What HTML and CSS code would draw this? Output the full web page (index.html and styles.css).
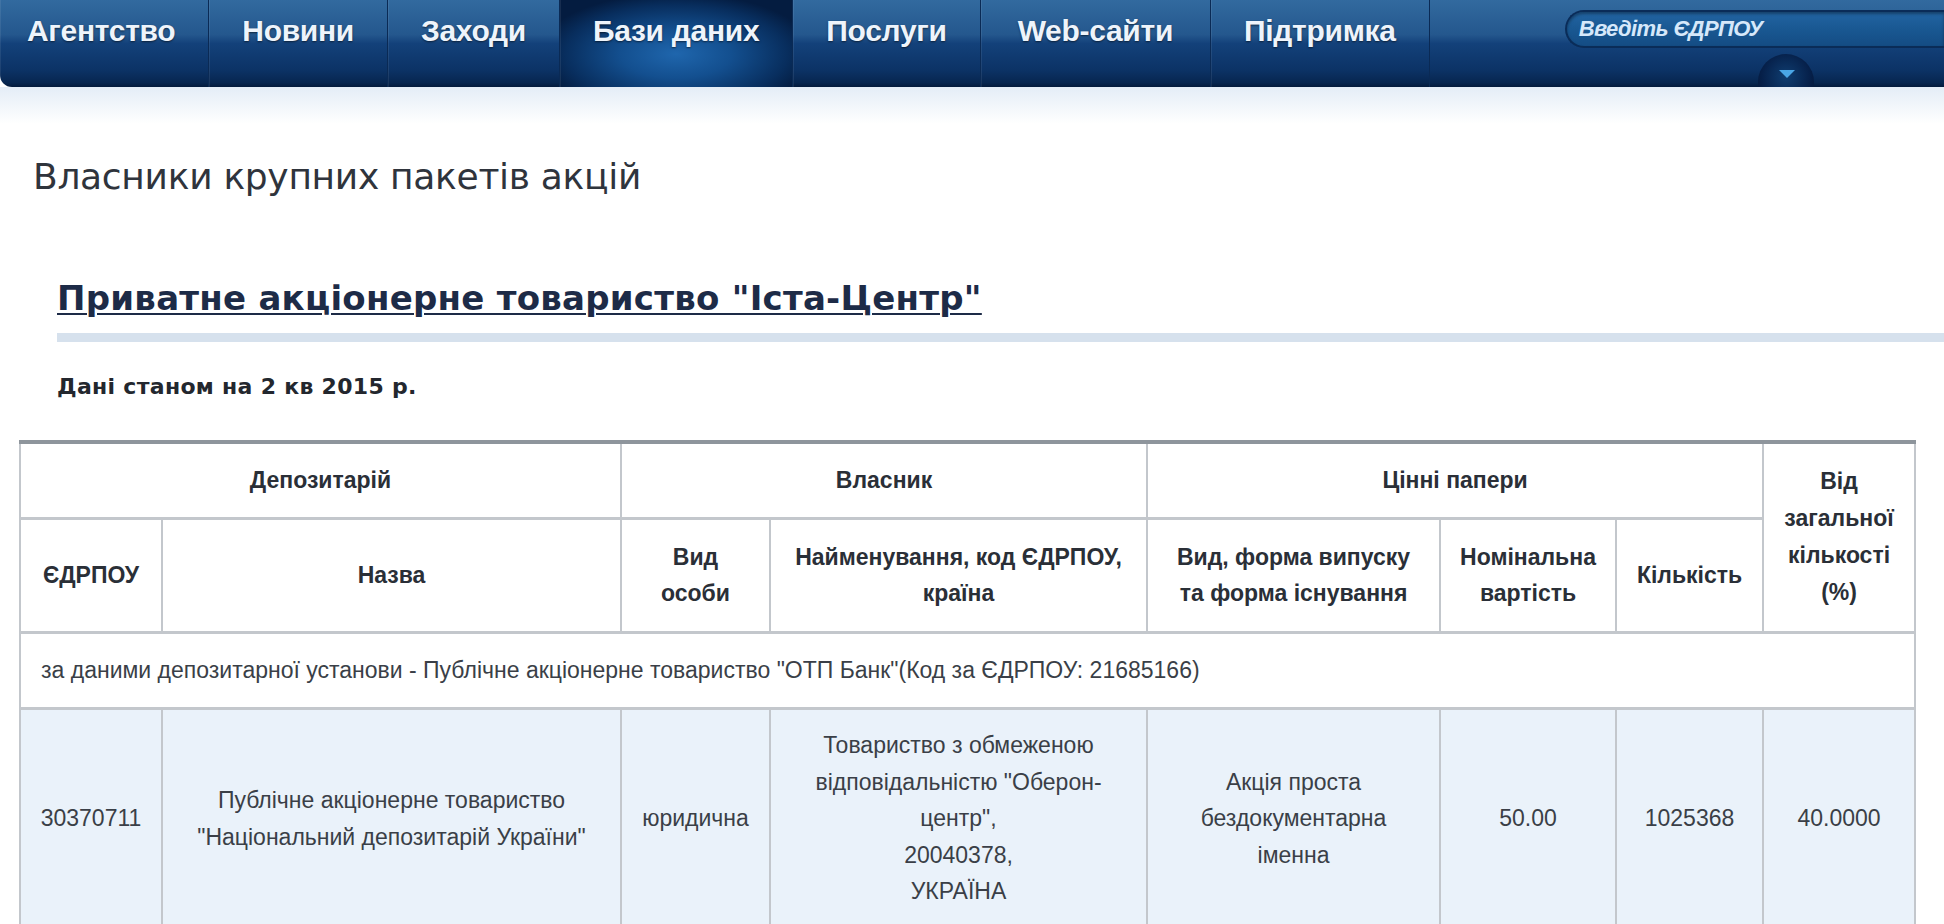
FILE: index.html
```html
<!DOCTYPE html>
<html lang="uk">
<head>
<meta charset="utf-8">
<title>Власники крупних пакетів акцій</title>
<link rel="stylesheet" href="styles.css">
</head>
<body>
<nav class="topnav">
  <ul class="menu">
    <li class="item first">Агентство</li>
    <li class="item">Новини</li>
    <li class="item">Заходи</li>
    <li class="item active">Бази даних</li>
    <li class="item">Послуги</li>
    <li class="item wide">Web-сайти</li>
    <li class="item">Підтримка</li>
  </ul>
  <div class="search-area">
    <div class="search">Введіть ЄДРПОУ</div>
    <span class="drop"><span class="tri"></span></span>
  </div>
</nav>
<div class="subbar"></div>
<main class="content">
  <h1 class="page-title">Власники крупних пакетів акцій</h1>
  <section class="company">
    <h2 class="company-name"><a href="#">Приватне акціонерне товариство "Іста-Центр"</a></h2>
    <div class="rule"></div>
    <p class="date">Дані станом на 2 кв 2015 р.</p>
  </section>
  <table class="owners">
    <colgroup>
      <col class="c1"><col class="c2"><col class="c3"><col class="c4">
      <col class="c5"><col class="c6"><col class="c7"><col class="c8">
    </colgroup>
    <thead>
      <tr class="h1">
        <th colspan="2">Депозитарій</th>
        <th colspan="2">Власник</th>
        <th colspan="3">Цінні папери</th>
        <th rowspan="2" class="pct">Від<br>загальної<br>кількості<br>(%)</th>
      </tr>
      <tr class="h2">
        <th>ЄДРПОУ</th>
        <th>Назва</th>
        <th>Вид<br>особи</th>
        <th>Найменування, код ЄДРПОУ,<br>країна</th>
        <th>Вид, форма випуску<br>та форма існування</th>
        <th>Номінальна<br>вартість</th>
        <th>Кількість</th>
      </tr>
    </thead>
    <tbody>
      <tr class="info">
        <td colspan="8">за даними депозитарної установи - Публічне акціонерне товариство "ОТП Банк"(Код за ЄДРПОУ: 21685166)</td>
      </tr>
      <tr class="data">
        <td>30370711</td>
        <td>Публічне акціонерне товариство<br>"Національний депозитарій України"</td>
        <td>юридична</td>
        <td>Товариство з обмеженою<br>відповідальністю "Оберон-<br>центр",<br>20040378,<br>УКРАЇНА</td>
        <td>Акція проста<br>бездокументарна<br>іменна</td>
        <td>50.00</td>
        <td>1025368</td>
        <td>40.0000</td>
      </tr>
    </tbody>
  </table>
</main>
</body>
</html>
```
FILE: styles.css
```css
html, body {
  margin: 0;
  padding: 0;
  background: #ffffff;
  font-family: "Liberation Sans", Arial, "Helvetica Neue", sans-serif;
  color: #2b2f36;
}

.topnav {
  display: flex;
  height: 87px;
  overflow: hidden;
  border-bottom-left-radius: 12px;
  background: linear-gradient(to bottom, #326a9f 0%, #24578d 40%, #13417a 50%, #0c3366 80%, #072650 95%, #031a3c 100%);
}

.menu {
  display: flex;
  margin: 0;
  padding: 0;
  list-style: none;
}

.item {
  padding: 12px 33px 0 33px;
  font-size: 30px;
  font-weight: bold;
  line-height: 38px;
  color: #eef4fb;
  text-shadow: 0 1px 2px rgba(0, 0, 0, 0.55);
  letter-spacing: -0.3px;
  border-right: 1px solid #0a2a55;
  box-shadow: inset 1px 0 0 rgba(255, 255, 255, 0.08);
  white-space: nowrap;
}

.item.first {
  padding-left: 27px;
}

.item.wide {
  padding-left: 37px;
  padding-right: 37px;
}

.item.active {
  background: radial-gradient(ellipse 60% 70% at 50% 62%, #1f66ad 0%, #134f8f 40%, #082e5e 80%, #041c40 100%);
}

.search-area {
  position: relative;
  flex: 1;
  padding: 10px 0 0 135px;
}

.search {
  height: 34px;
  padding-left: 12px;
  border: 2px solid #0a2c58;
  border-right: none;
  border-radius: 20px 0 0 20px;
  background: linear-gradient(to bottom, #2264a2 0%, #195892 50%, #144c84 100%);
  box-shadow: inset 0 2px 3px rgba(0, 0, 0, 0.35);
  font-size: 22px;
  font-style: italic;
  font-weight: bold;
  line-height: 34px;
  color: #d6e8fa;
  letter-spacing: -0.6px;
}

.drop {
  position: absolute;
  left: 328px;
  top: 54px;
  width: 56px;
  height: 56px;
  border-radius: 50%;
  background: radial-gradient(circle at 50% 40%, #0f3d70 0%, #06204a 55%, #020e26 100%);
}

.tri {
  position: absolute;
  left: 21px;
  top: 16px;
  width: 0;
  height: 0;
  border-left: 8px solid transparent;
  border-right: 8px solid transparent;
  border-top: 8px solid #4aa6e6;
}

.subbar {
  height: 37px;
  background: linear-gradient(to bottom, #e4edf7 0%, #f3f7fb 55%, #ffffff 100%);
}

.content {
  padding: 0 30px 0 19px;
}

.page-title {
  margin: 32px 0 0 14px;
  font-family: "DejaVu Sans", Verdana, sans-serif;
  font-size: 36px;
  font-weight: normal;
  line-height: 42px;
  color: #2f343c;
  letter-spacing: -0.3px;
}

.company {
  margin-left: 38px;
  margin-right: -30px;
}

.company-name {
  margin: 80px 0 0 0;
  font-family: "DejaVu Sans", Verdana, sans-serif;
  font-size: 34px;
  line-height: 40px;
  font-weight: bold;
  letter-spacing: 0.25px;
}

.company-name a {
  color: #1d2b47;
  text-decoration: underline;
  text-decoration-thickness: 2px;
  text-underline-offset: 3px;
}

.rule {
  height: 9px;
  margin-top: 15px;
  background: #d6e1ed;
}

.date {
  margin: 32px 0 0 0;
  font-family: "DejaVu Sans", Verdana, sans-serif;
  font-size: 22px;
  line-height: 26px;
  font-weight: bold;
  color: #23272e;
  letter-spacing: 0.3px;
}

.owners {
  margin-top: 40px;
  width: 1895px;
  table-layout: fixed;
  border-collapse: collapse;
  border-top: 4px solid #8e959c;
  font-size: 23px;
}

.c1 { width: 142px; }
.c2 { width: 459px; }
.c3 { width: 149px; }
.c4 { width: 377px; }
.c5 { width: 293px; }
.c6 { width: 176px; }
.c7 { width: 147px; }
.c8 { width: 152px; }

.owners th,
.owners td {
  border: 2px solid #c3c7cc;
  border-top-width: 3px;
  padding: 0 6px;
  text-align: center;
  vertical-align: middle;
}

.owners th {
  font-weight: bold;
  color: #2a2f37;
  line-height: 36px;
}

.owners .h1 { height: 76px; }
.owners .h2 { height: 114px; }

.owners .pct {
  line-height: 37px;
}

.owners td {
  color: #3a3f47;
  line-height: 36.5px;
}

.owners .info td {
  height: 73px;
  text-align: left;
  padding-left: 20px;
  background: #ffffff;
}

.owners .data td {
  height: 218px;
  background: #eaf2fa;
}
```
